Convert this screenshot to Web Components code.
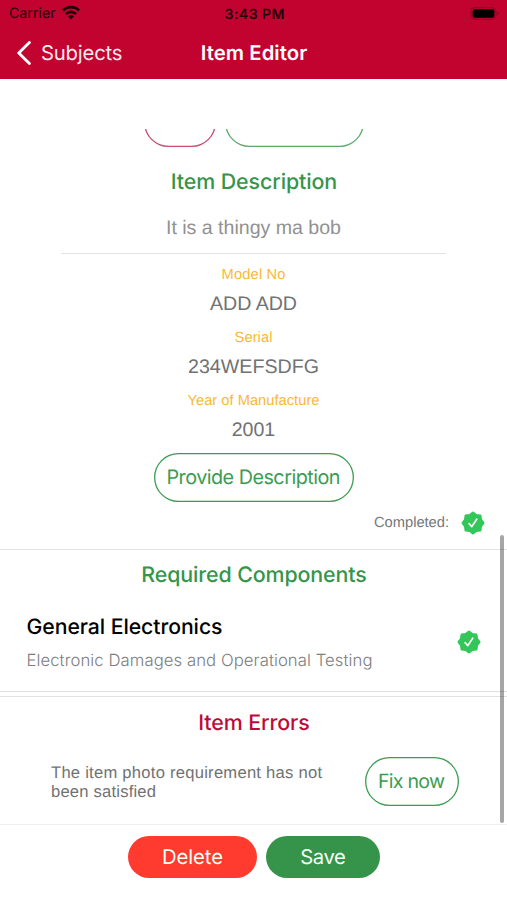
<!DOCTYPE html>
<html lang="en">
<head>
<meta charset="utf-8">
<title>Item Editor</title>
<style>
html, body { margin: 0; background: #fff; overflow: hidden; }
</style>
</head>
<body>
<item-app></item-app>
<script>
const UI = 'Inter, "Liberation Sans", sans-serif';
const BODY = '"Liberation Sans", Arial, sans-serif';

function define(name, html, ready) {
  const t = document.createElement('template');
  t.innerHTML = html;
  customElements.define(name, class extends HTMLElement {
    constructor() {
      super();
      this.attachShadow({ mode: 'open' }).append(t.content.cloneNode(true));
    }
    connectedCallback() { if (ready) ready(this); }
  });
}

// One line of text; "fit" tracks the letters so the line is that many pixels wide.
define('ui-text', `<style>
  :host { display: flex; align-items: center; justify-content: center; white-space: nowrap; text-rendering: geometricPrecision; }
  :host([start]) { justify-content: flex-start; }
  span { display: block; line-height: 1; }
</style><span><slot></slot></span>`, el => {
  el.style.fontFamily = el.hasAttribute('ui') ? UI : BODY;
  el.style.fontSize = el.getAttribute('size') + 'px';
  const h = el.getAttribute('h');
  if (h) el.style.height = h + 'px';
  const fit = parseFloat(el.getAttribute('fit'));
  if (fit) {
    const s = el.shadowRoot.querySelector('span');
    const n = el.textContent.trim().length - 1;
    const ls = (fit - s.getBoundingClientRect().width) / n;
    s.style.letterSpacing = ls + 'px';
    s.style.marginRight = -ls + 'px';
  }
});

define('status-bar', `<style>
  :host { display: grid; grid-template-columns: 1fr auto 1fr; align-items: center; height: 28px; padding: 0 7px 0 9px; color: #21000a; }
  .left { display: flex; align-items: center; gap: 6px; }
  .left ui-text, .time { padding-top: 1px; }
  .wifi { width: 18px; height: 15px; margin-top: -2px; }
  .battery { width: 30px; height: 13px; justify-self: end; margin-top: -1px; }
  .time { font-weight: 600; }
</style>
<div class="left"><ui-text ui size="14.2" fit="46.5">Carrier</ui-text>
<svg class="wifi" viewBox="0 0 18 15"><g fill="none" stroke="#21000a" stroke-width="2.7"><path d="M.9 5.6C5.2.9 12.8.9 17.1 5.6"/><path d="M4 9c2.7-2.8 7.3-2.8 10 0"/></g><path fill="#21000a" d="M6 11.3c1.6-1.6 4.4-1.6 6 0l-3 3.1z"/></svg></div>
<ui-text class="time" ui size="14" fit="60">3:43 PM</ui-text>
<svg class="battery" viewBox="0 0 30 13"><rect x="1" y=".7" width="25" height="11.6" rx="3.4" fill="none" stroke="#8b0823" stroke-width="1"/><rect x="2.6" y="2.2" width="21.8" height="8.6" rx="2" fill="#000"/><path d="M27.4 4.4c2 .7 2 3.5 0 4.2z" fill="#8b0823"/></svg>`);

define('nav-bar', `<style>
  :host { display: grid; grid-template-columns: 1fr auto 1fr; align-items: center; height: 49px; padding: 0 17px; color: #fff; }
  .back { display: flex; align-items: center; gap: 10px; color: #ffe9ee; }
  .back svg { width: 14px; height: 24px; }
  .back ui-text, .title { padding-top: 1px; }
  .title { font-weight: 600; padding-left: 1px; }
</style>
<div class="back"><svg viewBox="0 0 14 24"><path d="M12.4 1.5 1.8 12l10.6 10.5" fill="none" stroke="#fff" stroke-width="2.9" stroke-linecap="round" stroke-linejoin="round"/></svg><ui-text ui size="20.3" fit="81.5">Subjects</ui-text></div>
<ui-text class="title" ui size="20.3" fit="106.5">Item Editor</ui-text>`);

define('pill-button', `<style>
  :host { display: flex; align-items: center; justify-content: center; box-sizing: border-box; height: 49px; box-shadow: inset 0 0 0 1.3px currentColor; border-radius: 24.5px; color: #3b9c51; flex: none; }
  :host([solid]) { box-shadow: none; height: 42px; border-radius: 21px; }
</style><slot></slot>`, el => {
  el.style.width = el.getAttribute('w') + 'px';
});

define('check-seal', `<style>:host { display: block; width: 24px; height: 24px; flex: none; } svg { display: block; }</style>
<svg width="24" height="24" viewBox="-12 -12 24 24"><path id="seal" fill="#33c759" stroke="#33c759" stroke-width="2.4" stroke-linejoin="round"/><path d="M-3.9.6-1.2 3.6 3.7-3.8" fill="none" stroke="#fff" stroke-width="1.7" stroke-linecap="round" stroke-linejoin="round"/></svg>`, el => {
  // Eight rounded points around the centre.
  const p = [];
  for (let i = 0; i < 16; i++) {
    const r = i % 2 ? 8.5 : 10.3, a = i * Math.PI / 8;
    p.push((r * Math.sin(a)).toFixed(2) + ' ' + (-r * Math.cos(a)).toFixed(2));
  }
  el.shadowRoot.getElementById('seal').setAttribute('d', 'M' + p.join('L') + 'Z');
});

define('form-field', `<style>
  :host { display: block; height: 63px; }
  ::slotted([slot=label]) { color: #f9b934; }
  ::slotted([slot=value]) { color: #707273; }
</style><slot name="label"></slot><slot name="value"></slot>`);

define('section-title', `<style>
  :host { display: block; font-weight: 500; color: #35954a; padding-left: 1px; }
  :host([error]) { color: #bd0b38; }
</style><slot></slot>`);

define('description-section', `<style>
  :host { display: flow-root; height: 421px; box-sizing: border-box; border-bottom: 1px solid #e4e4e4; }
  .cut { display: flex; justify-content: center; gap: 9px; margin-top: -31.5px; padding-left: 1px; }
  .cut pill-button { opacity: .85; }
  section-title { margin-top: 20.5px; }
  .desc { color: #909192; margin: 17px 61px 0; height: 39px; box-sizing: border-box; border-bottom: 1px solid #e2e2e2; }
  .desc ui-text { margin-top: 2px; }
  .fields { padding-top: 10px; height: 199px; box-sizing: border-box; }
  .center { display: flex; justify-content: center; }
  .center ui-text { padding-top: 1px; }
  .done { display: flex; justify-content: flex-end; align-items: center; gap: 12px; padding: 9px 22px 0 0; color: #757677; }
  .done ui-text { padding-top: 1px; }
</style>
<div class="cut"><pill-button w="72" style="color:#c32b54"></pill-button><pill-button w="139"></pill-button></div>
<section-title><ui-text ui size="21.4" h="31" fit="166.5">Item Description</ui-text></section-title>
<div class="desc"><ui-text size="19.6" h="28" fit="175">It is a thingy ma bob</ui-text></div>
<div class="fields">
<form-field><ui-text slot="label" size="14.7" h="23" fit="64">Model No</ui-text><ui-text slot="value" size="19.6" h="36" fit="87">ADD ADD</ui-text></form-field>
<form-field><ui-text slot="label" size="14.7" h="23" fit="38">Serial</ui-text><ui-text slot="value" size="19.6" h="36" fit="131">234WEFSDFG</ui-text></form-field>
<form-field><ui-text slot="label" size="14.7" h="23" fit="132">Year of Manufacture</ui-text><ui-text slot="value" size="19.6" h="36" fit="43.5">2001</ui-text></form-field>
</div>
<div class="center"><pill-button w="200"><ui-text ui size="19.8" fit="174">Provide Description</ui-text></pill-button></div>
<div class="done"><ui-text size="14.7" fit="75">Completed:</ui-text><check-seal></check-seal></div>`);

define('components-section', `<style>
  :host { display: block; height: 142px; box-sizing: border-box; border-bottom: 1px solid #dfdfdf; padding-top: 10px; }
  .row { display: flex; justify-content: space-between; align-items: center; padding: 0 26px 0 26.5px; margin-top: 19px; }
  .name { color: #000; font-weight: 500; }
  .info { color: #7c7e7f; font-weight: 300; margin-top: -1px; }
  check-seal { margin-top: -5px; }
</style>
<section-title><ui-text ui size="21.4" h="32" fit="225.5">Required Components</ui-text></section-title>
<div class="row"><div><ui-text start class="name" ui size="21.2" h="34" fit="196">General Electronics</ui-text><ui-text start class="info" ui size="16.7" h="34" fit="346">Electronic Damages and Operational Testing</ui-text></div><check-seal></check-seal></div>`);

define('errors-section', `<style>
  :host { display: block; height: 129px; box-sizing: border-box; margin-top: 4px; border-top: 1px solid #e2e2e2; border-bottom: 1px solid #eee; padding-top: 11px; }
  .row { display: flex; justify-content: space-between; align-items: center; padding: 0 48.5px 0 51px; margin-top: 17px; color: #707273; }
  .msg { padding-top: 2px; }
  pill-button ui-text { padding-top: 1px; }
</style>
<section-title error><ui-text ui size="21.4" h="32" fit="111.5">Item Errors</ui-text></section-title>
<div class="row"><div class="msg"><ui-text start size="16.6" h="19" fit="271">The item photo requirement has not</ui-text><ui-text start size="16.6" h="19" fit="105">been satisfied</ui-text></div><pill-button w="94"><ui-text ui size="19.6" fit="67">Fix now</ui-text></pill-button></div>`);

define('action-bar', `<style>
  :host { display: flex; justify-content: center; gap: 9px; padding: 11px 0 0 1px; }
  pill-button { color: #f5fff7; }
  pill-button ui-text { padding-top: 1px; }
  .delete { background: #ff3b30; }
  .save { background: #359449; }
</style>
<pill-button class="delete" solid w="129"><ui-text ui size="20.3" fit="61">Delete</ui-text></pill-button><pill-button class="save" solid w="114"><ui-text ui size="20.3" fit="45.5">Save</ui-text></pill-button>`);

define('item-app', `<style>
  :host { display: flex; flex-direction: column; position: relative; width: 507px; height: 900px; background: #fff; overflow: hidden; }
  header { background: #c2032f; height: 79px; flex: none; }
  main { height: 696px; margin-top: 50px; overflow: hidden; flex: none; }
  .thumb { position: absolute; right: 3.5px; top: 535px; width: 4px; height: 288px; border-radius: 2px; background: rgba(0,0,0,.35); }
</style>
<header><status-bar></status-bar><nav-bar></nav-bar></header>
<main><description-section></description-section><components-section></components-section><errors-section></errors-section></main>
<action-bar></action-bar>
<div class="thumb"></div>`);
</script>
</body>
</html>
